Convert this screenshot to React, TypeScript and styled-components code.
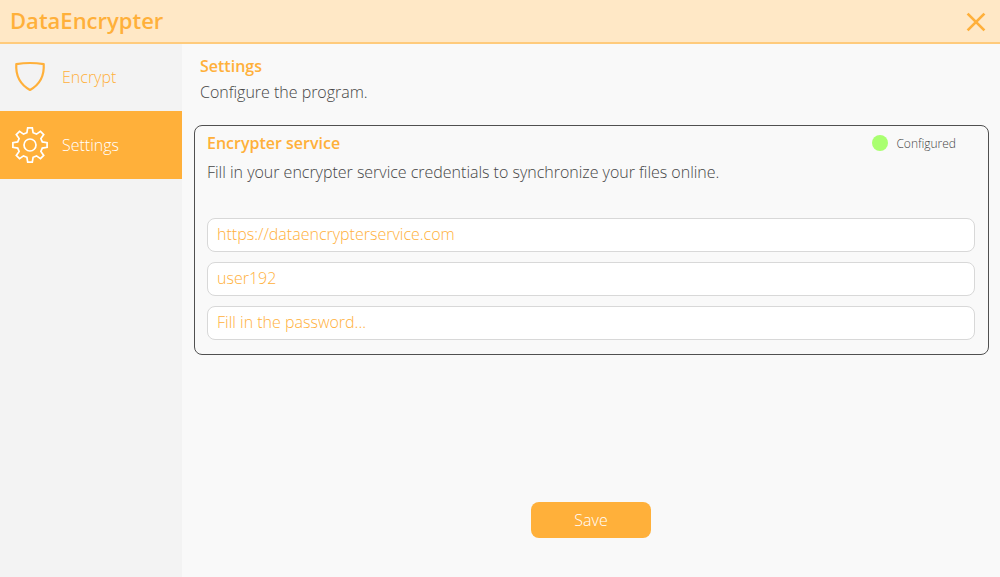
import React from 'react';
import styled, { createGlobalStyle } from 'styled-components';

const accent = '#ffb03a';

const GlobalStyle = createGlobalStyle`
  * { box-sizing: border-box; }
  body {
    margin: 0;
    font-family: "Open Sans", sans-serif;
    font-size: 16px;
    font-weight: 300;
    line-height: 22px;
    color: #464646;
  }
`;

const Window = styled.div`
  display: flex;
  flex-direction: column;
  width: 1000px;
  height: 577px;
  overflow: hidden;
  background: #f9f9f9;
`;

const Header = styled.header`
  display: flex;
  justify-content: space-between;
  align-items: center;
  flex: none;
  height: 44px;
  padding: 0 14px 0 10px;
  background: #ffe8c6;
  border-bottom: 2px solid #ffcb7c;
`;

const Title = styled.h1`
  margin: 0 0 2px;
  font-size: 22px;
  font-weight: 600;
  line-height: 30px;
  color: ${accent};
`;

const CloseButton = styled.button`
  display: flex;
  margin: 2px 0 0;
  padding: 0;
  border: 0;
  background: none;
`;

const Body = styled.div`
  display: flex;
  flex: 1;
`;

const Sidebar = styled.nav`
  flex: none;
  width: 182px;
  background: #f3f3f3;
`;

const NavItem = styled.a<{ $active?: boolean }>`
  display: flex;
  align-items: center;
  gap: 14px;
  height: ${p => (p.$active ? 68 : 67)}px;
  padding: 0 12px ${p => (p.$active ? 0 : 1)}px;
  color: ${p => (p.$active ? '#fff' : accent)};
  background: ${p => (p.$active ? accent : 'transparent')};
`;

const Main = styled.main`
  display: flex;
  flex-direction: column;
  flex: 1;
  padding: 11px 11px 0 12px;
`;

const Intro = styled.section`
  padding-left: 6px;
`;

const Heading = styled.h2`
  margin: 0;
  font-size: 16px;
  font-weight: 600;
  color: ${accent};
`;

const Text = styled.p<{ $gap: number }>`
  margin: ${p => p.$gap}px 0 0;
  letter-spacing: -0.016px;
`;

const Card = styled.section`
  height: 230px;
  margin-top: 22px;
  padding: 6px 13px 0 12px;
  border: 1px solid #505050;
  border-radius: 8px;
`;

const CardHeader = styled.div`
  display: flex;
  justify-content: space-between;
  align-items: center;
  padding-right: 19px;
`;

const Status = styled.span`
  display: flex;
  align-items: center;
  gap: 8px;
  font-size: 12px;
`;

const StatusLabel = styled.span`
  padding-top: 2px;
  line-height: 20px;
`;

const StatusDot = styled.i`
  width: 16px;
  height: 16px;
  border-radius: 50%;
  background: #a9ff70;
`;

const Fields = styled.div`
  display: flex;
  flex-direction: column;
  gap: 10px;
  margin-top: 35px;
`;

const Field = styled.input`
  width: 100%;
  height: 34px;
  padding: 0 9px 2px;
  border: 1px solid #d8d8d8;
  border-radius: 8px;
  outline: 0;
  background: #fff;
  font: inherit;
  color: ${accent};
  &::placeholder { color: ${accent}; opacity: 1; }
`;

const SaveButton = styled.button`
  align-self: center;
  width: 120px;
  height: 36px;
  margin: 147px 1px 0 0;
  padding: 0;
  border: 0;
  border-radius: 8px;
  background: ${accent};
  color: #fff;
  font: inherit;
`;

const toothAngles = [0, 45, 90, 135, 180, 225, 270, 315];
const toothProfile = [[-3.1, -12.3], [-2.3, -17.1], [2.3, -17.1], [3.1, -12.3]];
const gearPoints = toothAngles
  .flatMap(deg => {
    const a = (deg * Math.PI) / 180;
    return toothProfile.map(([x, y]) =>
      `${(18 + x * Math.cos(a) - y * Math.sin(a)).toFixed(2)},${(18 + x * Math.sin(a) + y * Math.cos(a)).toFixed(2)}`
    );
  })
  .join(' ');

const ShieldIcon = () => (
  <svg width="36" height="36" viewBox="0 0 36 36" fill="none" stroke="currentColor" strokeWidth="2.2" strokeLinejoin="round">
    <path d="M4.3 5.1Q18 2.9 31.7 5.1C32.4 15.5 28.5 25 18 31C7.5 25 3.6 15.5 4.3 5.1Z" />
  </svg>
);

const GearIcon = () => (
  <svg width="36" height="36" viewBox="0 0 36 36" fill="none" stroke="currentColor" strokeWidth="1.7" strokeLinejoin="miter">
    <polygon points={gearPoints} />
    <circle cx="18" cy="18" r="6" />
  </svg>
);

const CloseIcon = () => (
  <svg width="20" height="20" viewBox="0 0 20 20" stroke={accent} strokeWidth="2.7">
    <path d="M1.6 1.6L18.4 18.4M18.4 1.6L1.6 18.4" />
  </svg>
);

export default function App() {
  return (
    <Window>
      <GlobalStyle />
      <Header>
        <Title>DataEncrypter</Title>
        <CloseButton aria-label="Close"><CloseIcon /></CloseButton>
      </Header>
      <Body>
        <Sidebar>
          <NavItem><ShieldIcon />Encrypt</NavItem>
          <NavItem $active><GearIcon />Settings</NavItem>
        </Sidebar>
        <Main>
          <Intro>
            <Heading>Settings</Heading>
            <Text $gap={4}>Configure the program.</Text>
          </Intro>
          <Card>
            <CardHeader>
              <Heading>Encrypter service</Heading>
              <Status><StatusDot /><StatusLabel>Configured</StatusLabel></Status>
            </CardHeader>
            <Text $gap={7}>Fill in your encrypter service credentials to synchronize your files online.</Text>
            <Fields>
              <Field defaultValue="https://dataencrypterservice.com" />
              <Field defaultValue="user192" />
              <Field type="password" placeholder="Fill in the password..." />
            </Fields>
          </Card>
          <SaveButton>Save</SaveButton>
        </Main>
      </Body>
    </Window>
  );
}
